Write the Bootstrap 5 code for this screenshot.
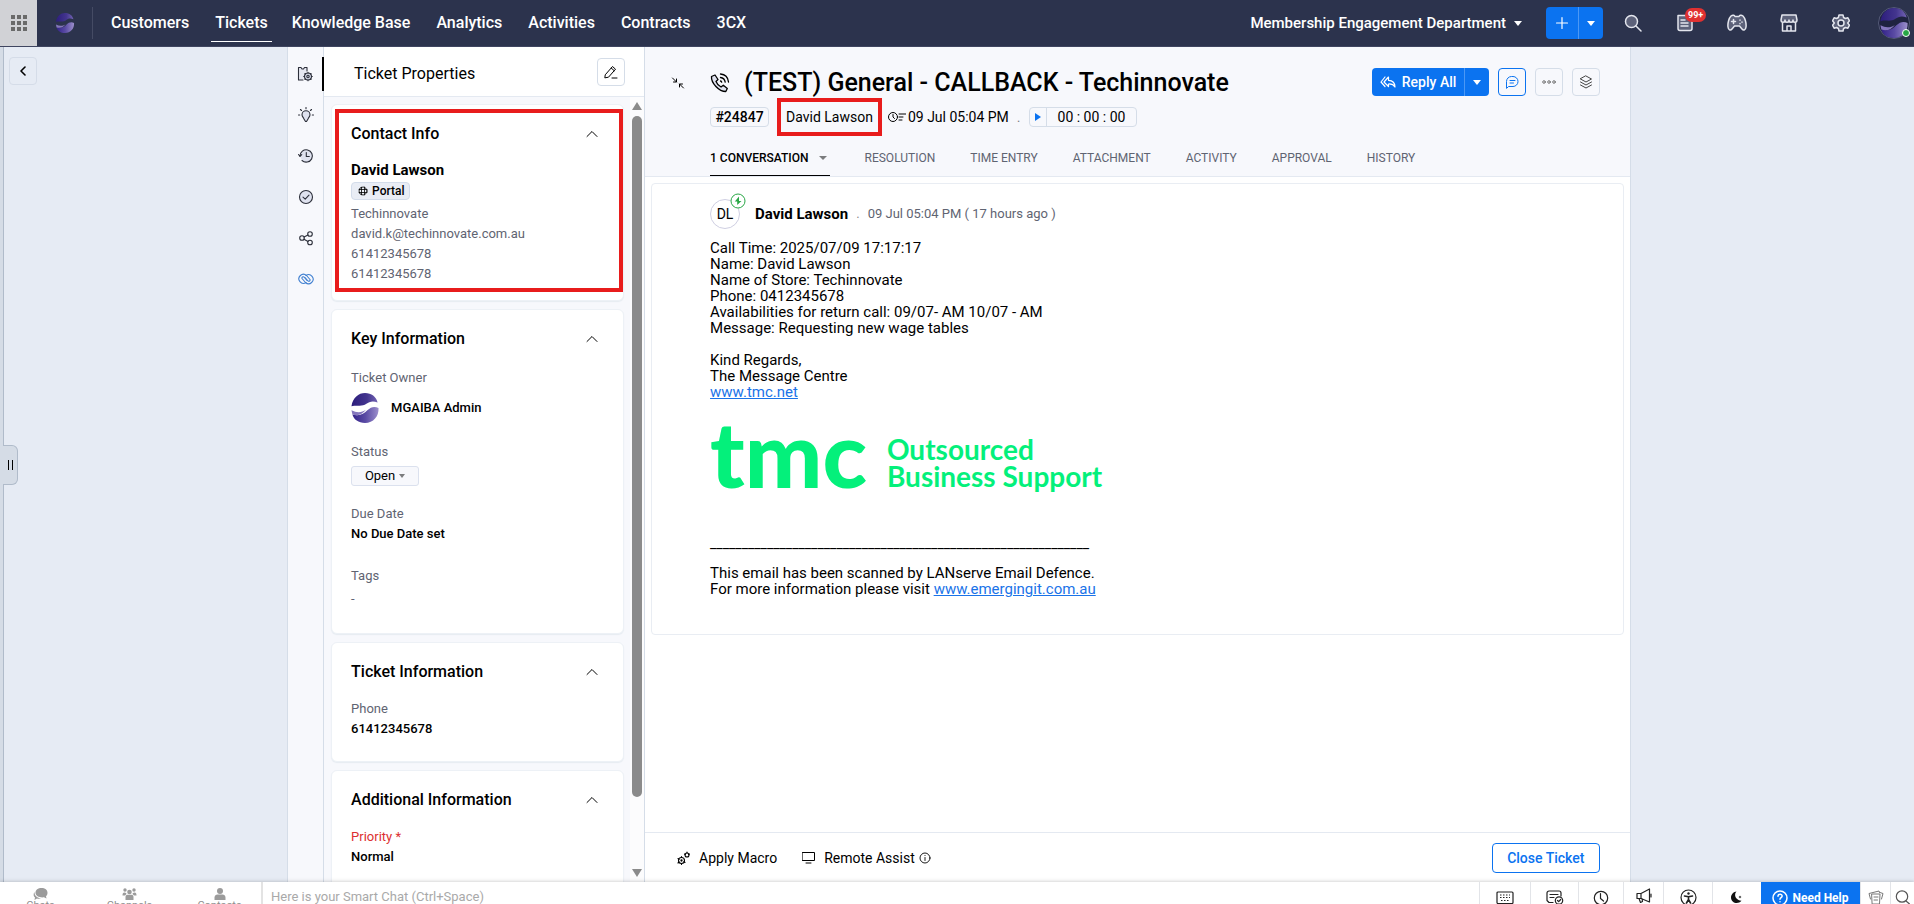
<!DOCTYPE html>
<html lang="en">
<head>
<meta charset="utf-8">
<meta name="viewport" content="width=device-width, initial-scale=1">
<title>#24847 General - CALLBACK</title>
<link rel="stylesheet" href="https://cdn.jsdelivr.net/npm/bootstrap@5.3.0/dist/css/bootstrap.min.css">
<style>
:root{--ink:#000;--soft:#5f6472;--line:#d5dde8;--pale:#f7f8fc;--blue:#0b73f0;--back:#e6ebf4;--red:#e81c1c}
body{font-family:Roboto,"Liberation Sans",sans-serif;font-size:13px;line-height:20px;color:var(--ink);background:var(--back)}
svg{display:block;flex:none}
.ico{fill:none;stroke:currentColor;stroke-width:1.2;stroke-linecap:round;stroke-linejoin:round}
button{color:inherit}
.plain{background:none;border:0;padding:0;white-space:nowrap}
/* top bar */
.topbar{height:47px;background:#2c334d;border-bottom:1px solid #3f4560;color:#fff;flex:none}
.apps{width:37px;background:#d1d2d6;color:#6a6a6a}
.brand-cell{width:56px;height:32px;border-right:1px solid #454b64}
.topbar .nav{margin-left:18px}
.topbar .nav-link{color:#fff;font-size:16px;font-weight:500;padding:0;line-height:38px;margin-right:26px;height:38px;border-bottom:1px solid transparent}
.topbar .nav-link.active{border-color:#fff;margin-left:-4px;margin-right:20px;padding:0 4px}
.dept{font-size:15px;font-weight:500}
.caret{width:0;height:0;border:4px solid transparent;border-top:5px solid currentColor;border-bottom:0}
.addgrp,.replygrp{background:var(--blue);color:#fff;border-radius:4px;overflow:hidden}
.addgrp{height:32px}
.addgrp .side,.replygrp .side{border-left:1px solid #4b98f5}
.topico{width:52px;height:46px;color:#e4e6ee}
.topico .ico{stroke-width:1.5}
.count{position:absolute;top:8px;left:26px;background:#e03131;color:#fff;border-radius:7px;font-size:9px;line-height:14px;padding:0 3px;font-weight:700}
.online{position:absolute;right:0;bottom:2px;width:8px;height:8px;border-radius:50%;background:#28a745;border:1px solid #fff}
/* side areas */
.leftside{width:15.05%;border-right:1px solid var(--line)}
.edge{width:4px;background:#d5dce6;border-right:1px solid #b0bbca}
.backbtn{width:28px;height:28px;margin:10px 0 0 5px;border:1px solid #d5dce8;border-radius:4px}
.grip{position:absolute;left:3px;top:398px;width:15px;height:40px;background:#d5dce6;border:1px solid #b0bbca;border-left:0;border-radius:0 6px 6px 0;gap:3px}
.grip i{width:1px;height:10px;background:#000}
.rightside{width:14.85%;border-left:1px solid var(--line)}
.rail{width:36px;background:var(--pale);border-right:1px solid var(--line);padding-top:10px}
.rail button{height:34px;margin-bottom:7px;width:36px;color:#2c2f3a}
.rail button.on{border-right:2px solid #000}
.rail .ico{stroke-width:1.1}
/* properties */
.props{width:321px;border-right:1px solid var(--line);background:var(--pale)}
.props-head{height:50px;background:#fff;border-bottom:1px solid #e4e9f1;padding:0 19px 0 30px;font-size:16px}
.square{width:28px;height:28px;border:1px solid var(--line);border-radius:4px;background:transparent}
.cards{padding:7px 0 0 7px;width:300px;gap:8px}
.panel{background:#fff;border:1px solid #edf1f6;border-radius:6px;box-shadow:0 1px 1px #e6ebf1;padding:19px 25px 0 19px;position:relative}
.panel h2{font-size:16px;font-weight:500;line-height:20px;margin:0}
.panel .lab{color:var(--soft)}
.panel .val{font-weight:500}
.marked{position:absolute;border:4px solid var(--red);pointer-events:none}
.portal{width:59px;height:18px;line-height:16px;border:1px solid #d3dcea;background:#e9edf5;border-radius:4px;font-size:12px;font-weight:500;padding:0 6px}
.openbtn{height:20px;width:68px;background:var(--pale);border:1px solid #dbe1ee;border-radius:3px;line-height:18px}
.bar{width:14px;padding:5px 2px;background:#fcfcfd}
.thumb{height:681px;margin:6px 0 auto;background:#8b8b8b;border-radius:5px}
.up,.down{width:0;height:0;border:5px solid transparent}
.up{border-bottom:8px solid #8b8b8b;border-top:0}
.down{border-top:8px solid #8b8b8b;border-bottom:0}
/* ticket */
.ticket{background:#fff}
.thead{background:var(--pale);border-bottom:1px solid #e4e9f1;height:130px}
.thead h1{font-size:25px;font-weight:500;line-height:32px;margin:0;white-space:nowrap}
.chip{height:20px;line-height:18px;border:1px solid var(--line);border-radius:4px;font-size:14px}
.row2{font-size:14px;white-space:nowrap}
.tabs{padding-left:65px}
.tabs .nav-link{color:var(--soft);padding:6px 0 7px;font-size:12px;line-height:20px;border-bottom:1px solid transparent;margin-right:35px;white-space:nowrap}
.tabs .nav-link.active{color:#000;border-color:#000;font-weight:500}
.reply{font-weight:500;font-size:14px}
.thread{margin:6px 6px 0;border:1px solid #e9edf3;border-radius:4px;padding:15px 58px 30px;min-height:452px}
.initials{width:30px;height:30px;border:1px solid #cfcfe2;border-radius:50%;position:relative;font-size:14px}
.initials svg{position:absolute;left:19px;top:-7px}
.mail{font-size:15px;line-height:16px;padding-top:11px}
.mail p{margin:0 0 16px}
.mail a{color:#1a73e8}
.tmc{font-family:Lato,sans-serif;color:#04f07b;height:58px;margin:24px 0 53px;gap:20px}
.tmc b{font-size:92px;font-weight:900;line-height:58px}
.tmc span{font-size:28px;font-weight:700;line-height:27px;padding-top:20px}
.mail .rule-line{font-size:14px;margin-bottom:14px}
.tfoot-bar{height:50px;border-top:1px solid #e4e9f1;padding:0 30px 0 32px;font-size:14px;font-weight:500;margin-top:auto}
.closebtn{height:30px;width:108px;border:1px solid var(--blue);border-radius:4px;color:var(--blue);font-weight:500;background:#fff}
/* chat strip */
.strip{height:22px;background:#fff;box-shadow:0 0 4px rgba(0,0,0,.25);position:relative;flex:none;overflow:visible;clip-path:inset(-6px 0 0 0)}
.strip-in{height:22px;overflow:hidden}
.tab3{width:89px;font-size:11px;line-height:12px;color:#8e8e8e;padding:6px 8px 0 0}
.tab3:nth-child(3){width:83px;padding-right:0}
.smart{border:0;border-left:2px solid #e3e3e3;padding:0 8px;height:28px;font-size:13px;outline:0;color:#333}
.smart::placeholder{color:#a9a9a9}
.cell{height:31px;border-left:1px solid #e2e4e8;color:#222}
.help{background:var(--blue);color:#fff;font-size:12px;font-weight:700;width:99px;height:31px}
</style>
</head>
<body class="vh-100 d-flex flex-column overflow-hidden">
<svg width="0" height="0" class="position-absolute" aria-hidden="true">
  <defs>
    <linearGradient id="ga"><stop offset="0" stop-color="#2c1d7c"/><stop offset=".6" stop-color="#43358e"/><stop offset="1" stop-color="#7263b3"/></linearGradient>
    <linearGradient id="gb"><stop offset="0" stop-color="#33228a"/><stop offset=".5" stop-color="#5a4ba4"/><stop offset="1" stop-color="#9c8fcc"/></linearGradient>
    <symbol id="swirl" viewBox="0 0 30 32">
      <path fill="url(#ga)" d="M.5 14C2 5 8 0 15 0c7 0 12 4 13.500 10-5-2-9-1-12 1.500C12 15 7 12.500.5 14z"/>
      <path fill="url(#gb)" d="M1.500 23c7 2 12 0 16-4.500 4-4 8-4.500 12-2.500C30 25 24 32 15 32 8 32 3 28.500 1.500 23z"/>
      <path fill="#8577bd" d="M.5 18.500c6 3 11 2.500 15.500-.5-4 5-8.500 7-14.500 5z"/>
    </symbol>
  </defs>
</svg>

<nav class="topbar d-flex align-items-center">
  <button class="plain apps h-100 d-flex align-items-center justify-content-center" aria-label="Apps">
    <svg width="16" height="16" fill="currentColor"><path d="M0 0h4v4H0zM6 0h4v4H6zM12 0h4v4h-4zM0 6h4v4H0zM6 6h4v4H6zM12 6h4v4h-4zM0 12h4v4H0zM6 12h4v4H6zM12 12h4v4h-4z"/></svg>
  </button>
  <a href="#" class="brand-cell d-flex align-items-center justify-content-center" aria-label="Home"><svg width="20" height="20"><use href="#swirl"/></svg></a>
  <div class="nav flex-nowrap">
    <a class="nav-link" href="#">Customers</a><a class="nav-link active" href="#">Tickets</a><a class="nav-link" href="#">Knowledge Base</a><a class="nav-link" href="#">Analytics</a><a class="nav-link" href="#">Activities</a><a class="nav-link" href="#">Contracts</a><a class="nav-link" href="#">3CX</a>
  </div>
  <div class="d-flex align-items-center ms-auto">
    <button class="plain dept d-flex align-items-center gap-2 me-4">Membership Engagement Department <span class="caret"></span></button>
    <div class="addgrp d-flex">
      <button class="plain px-2" aria-label="Add"><svg class="ico" width="16" height="16"><path d="M8 2.500v11M2.500 8h11"/></svg></button>
      <button class="plain side px-2" aria-label="More"><span class="caret d-block"></span></button>
    </div>
    <button class="plain topico d-flex align-items-center justify-content-center ms-1" aria-label="Search"><svg class="ico" width="18" height="18"><circle cx="7.500" cy="7.500" r="6" fill="#5d627a"/><path d="M12 12l5 5"/></svg></button>
    <button class="plain topico d-flex align-items-center justify-content-center position-relative" aria-label="Notifications"><svg class="ico" width="18" height="18"><path fill="#5d627a" d="M2 1.500h8l6 5v8a2 2 0 0 1-2 2H4a2 2 0 0 1-2-2z"/><path d="M5 6h4M5 9h7M5 12h7"/></svg><span class="count">99+</span></button>
    <button class="plain topico d-flex align-items-center justify-content-center" aria-label="Games"><svg class="ico" width="20" height="18"><path fill="#5d627a" d="M4 2c2-1.500 3.500-.5 4 .5h4c.5-1 2-2 4-.5 2 2 3.500 7 3 11-.3 3-2.500 4-4 2l-2.500-3h-5L5 15c-1.500 2-3.700 1-4-2C.5 9 2 4 4 2z"/><path d="M6.500 5.500v4M4.500 7.500h4M13 6v.2M15 8v.2M13 9.500v.2"/></svg></button>
    <button class="plain topico d-flex align-items-center justify-content-center" aria-label="Marketplace"><svg class="ico" width="18" height="18"><path fill="#5d627a" d="M2 1h14l1 5c0 3-4 3-4 0 0 3-4 3-4 0 0 3-4 3-4 0 0 3-4 3-4 0z"/><path d="M2.500 9v8h13V9M7 17v-5h4v5"/></svg></button>
    <button class="plain topico d-flex align-items-center justify-content-center" aria-label="Settings"><svg class="ico" width="18" height="18"><path fill="#5d627a" d="M7 1h4l.6 2.500 1.800 1 2.500-.7 1.600 3L15.700 9l1.800 2.200-1.600 3-2.500-.7-1.800 1L11 17H7l-.6-2.500-1.800-1-2.500.7-1.600-3L2.300 9 .5 6.800l1.600-3 2.500.7 1.800-1z"/><circle cx="9" cy="9" r="3" fill="#2c334d"/></svg></button>
    <button class="plain position-relative me-1" style="margin-left:11px" aria-label="Profile"><svg width="32" height="32"><circle cx="16" cy="16" r="15.500" fill="#1f2340" stroke="#555b78"/><use href="#swirl" x="1" y="1" width="30" height="30"/></svg><span class="online"></span></button>
  </div>
</nav>

<main class="d-flex flex-grow-1 overflow-hidden" style="min-height:0">
  <aside class="leftside d-flex align-items-stretch position-relative flex-shrink-0">
    <div class="edge"></div>
    <button class="plain backbtn d-flex align-items-center justify-content-center" aria-label="Back"><svg class="ico" width="8" height="10" style="stroke-width:1.6"><path d="M6 1L2 5l4 4"/></svg></button>
    <button class="grip p-0 d-flex align-items-center justify-content-center" aria-label="Expand"><i></i><i></i></button>
  </aside>

  <div class="rail flex-shrink-0">
    <button class="plain on d-flex align-items-center justify-content-center" aria-label="Properties"><svg class="ico" width="16" height="16"><path fill="#e6e8f2" d="M6 14H1.500V1.500H4l1 1.500 1.500 0L7.500 1.500H10V5"/><circle cx="11" cy="10.500" r="3.500" fill="#cfd3e2"/><circle cx="11" cy="10.500" r="1.200"/><path d="M11 6.200v.8M11 14v.8M6.700 10.500h.8M14.500 10.500h.8M8 7.500l.5.5M13.500 13l.5.500M14 7.500l-.5.5M8.500 13l-.5.500"/></svg></button>
    <button class="plain d-flex align-items-center justify-content-center" aria-label="Insights"><svg class="ico" width="16" height="16"><path fill="#dfe2ef" d="M6 12C5.500 10.500 4 9.700 4 7.800a4 4 0 0 1 8 0c0 1.900-1.500 2.700-2 4.200L8.500 14.500h-1z"/><path d="M8 .5v1.200M2.500 2.500l1 1M13.500 2.500l-1 1M.5 8h1.200M14.300 8h1.200"/></svg></button>
    <button class="plain d-flex align-items-center justify-content-center" aria-label="Recent"><svg class="ico" width="16" height="16"><path fill="#dfe2ef" d="M2 8a6.200 6.200 0 1 1 2 4.500"/><path d="M.5 6.500L2 8.300l1.700-1.600M8.300 4.500V8.500h3"/></svg></button>
    <button class="plain d-flex align-items-center justify-content-center" aria-label="Approvals"><svg class="ico" width="16" height="16"><circle cx="8" cy="8" r="6.500" fill="#dfe2ef"/><path d="M5 8.200l2.200 2L11 6.200"/></svg></button>
    <button class="plain d-flex align-items-center justify-content-center" aria-label="Share"><svg class="ico" width="16" height="16"><circle cx="4" cy="8" r="2.300"/><circle cx="12" cy="4" r="2.300"/><circle cx="12" cy="12.500" r="2.300"/><path d="M6 7l4-2M6 9.200l4 2.200"/></svg></button>
    <button class="plain d-flex align-items-center justify-content-center" style="color:#3f7fd0" aria-label="Linked"><svg class="ico" width="16" height="12"><path d="M8 9.500a4.500 4.500 0 1 1 .5-7L12 6.500a1.300 1.300 0 0 1-2 1.500L7 4.500"/><path d="M8 2.500a4.500 4.500 0 1 1-.5 7L4 5.500A1.300 1.300 0 0 1 6 4l3 3.500"/></svg></button>
  </div>

  <section class="props d-flex flex-column flex-shrink-0">
    <div class="props-head d-flex align-items-center justify-content-between flex-shrink-0"><span class="pt-1">Ticket Properties</span>
      <button class="square p-0 d-flex align-items-center justify-content-center" aria-label="Edit"><svg class="ico" width="14" height="14" style="stroke-width:1"><path d="M1.500 9.500l7-8 3 2.700-7 8-3.300.6zM7.200 3l3 2.700M8 13h5"/></svg></button>
    </div>
    <div class="d-flex flex-grow-1 overflow-hidden">
      <div class="cards d-flex flex-column">
        <article class="panel pb-3">
          <div class="d-flex justify-content-between align-items-center"><h2>Contact Info</h2><svg class="ico" width="12" height="8" style="stroke-width:1"><path d="M1 6.500l5-5 5 5"/></svg></div>
          <div class="fw-bold" style="font-size:15px;line-height:24px;margin-top:14px">David Lawson</div>
          <div class="portal d-flex align-items-center gap-1"><svg class="ico" width="10" height="10" style="stroke-width:.8"><circle cx="5" cy="5" r="4"/><path d="M1 3.500h8M1 6.500h8M3.500 1.200v7.600M6.500 1.200v7.600"/></svg>Portal</div>
          <div class="lab pt-1">Techinnovate<br>david.k@techinnovate.com.au<br>61412345678<br>61412345678</div>
          <div class="marked" style="inset:4px 0 8px 3px"></div>
        </article>
        <article class="panel pb-4">
          <div class="d-flex justify-content-between align-items-center"><h2>Key Information</h2><svg class="ico" width="12" height="8" style="stroke-width:1"><path d="M1 6.500l5-5 5 5"/></svg></div>
          <div class="lab" style="margin-top:19px">Ticket Owner</div>
          <div class="val d-flex align-items-center" style="margin-top:5px;gap:12px"><svg width="28" height="30"><use href="#swirl"/></svg>MGAIBA Admin</div>
          <div class="lab" style="margin-top:19px">Status</div>
          <button class="openbtn d-flex align-items-center justify-content-center gap-1 mt-1 p-0">Open <span class="caret text-black-50" style="border-width:4px 3px 0"></span></button>
          <div class="lab" style="margin-top:18px">Due Date</div>
          <div class="val">No Due Date set</div>
          <div class="lab" style="margin-top:22px">Tags</div>
          <div class="lab" style="margin-top:3px">-</div>
        </article>
        <article class="panel" style="padding-bottom:22px">
          <div class="d-flex justify-content-between align-items-center"><h2>Ticket Information</h2><svg class="ico" width="12" height="8" style="stroke-width:1"><path d="M1 6.500l5-5 5 5"/></svg></div>
          <div class="lab" style="margin-top:17px">Phone</div>
          <div class="val">61412345678</div>
        </article>
        <article class="panel pb-5">
          <div class="d-flex justify-content-between align-items-center"><h2>Additional Information</h2><svg class="ico" width="12" height="8" style="stroke-width:1"><path d="M1 6.500l5-5 5 5"/></svg></div>
          <div style="margin-top:17px;color:#dc3030">Priority *</div>
          <div class="val">Normal</div>
        </article>
      </div>
      <div class="bar ms-auto d-flex flex-column"><div class="up"></div><div class="thumb w-100"></div><div class="down"></div></div>
    </div>
  </section>

  <section class="ticket d-flex flex-column flex-grow-1" style="min-width:0">
    <header class="thead d-flex flex-column flex-shrink-0">
      <div class="d-flex">
        <button class="plain align-self-start flex-shrink-0" style="width:65px;padding:29px 0 0 26px" aria-label="Collapse"><svg class="ico" width="14" height="14" style="stroke-width:1"><path d="M1.500 2l4 4M5.500 3v3h-3M12.500 12l-4-4M8.500 11V8h3"/></svg></button>
        <div class="flex-grow-1" style="padding-top:20px">
          <div class="d-flex align-items-center" style="gap:14px">
            <svg class="ico" width="20" height="20" style="stroke-width:1.300"><path fill="#dfe2ef" d="M1.500 3.500L5 2l3 4.500-2 2c1 2.500 3 4.500 5 5.500l2.300-1.800 4 3.300-1.500 3C9 18.500 1 10 1.500 3.500z"/><path d="M10.500 4.500c2.500.3 4.300 2 4.700 4.700M10.500 1c4.500.3 7.500 3.500 8 8M10.500 8c.6.100 1 .5 1.200 1.200"/></svg>
            <h1>(TEST) General - CALLBACK - Techinnovate</h1>
          </div>
          <div class="row2 d-flex align-items-center mt-2">
            <span class="chip text-center" style="width:59px;font-weight:500">#24847</span>
            <span class="position-relative" style="margin:0 15px 0 17px"><a href="#" class="text-black text-decoration-none">David Lawson</a><span class="marked" style="inset:-9px"></span></span>
            <svg class="ico" width="18" height="12" style="stroke-width:1;margin-right:2px"><circle cx="5" cy="6" r="4.500"/><path d="M5 3.500V6l1.500 1.500M11 3h7M11 6h4M11 9h3"/></svg>
            <span>09 Jul 05:04 PM</span>
            <span class="mx-2 text-black-50">.</span>
            <span class="chip d-flex"><button class="plain d-flex align-items-center justify-content-center" style="width:17px;border-right:1px solid #d5dde8" aria-label="Start timer"><svg width="6" height="8"><path fill="#0b73f0" d="M0 0l6 4-6 4z"/></svg></button><span style="padding:0 11px">00 : 00 : 00</span></span>
          </div>
        </div>
        <div class="d-flex align-self-start" style="gap:9px;padding:21px 30px 0 0">
          <div class="replygrp d-flex" style="height:28px">
            <button class="plain reply d-flex align-items-center ps-2 pe-1" style="gap:6px"><svg class="ico" width="16" height="12"><path d="M5 1L1 6l4 4.500M8.500 1L4 6l4.500 4.500V8c3-.2 5 .5 6.500 3 0-4-2.500-6.500-6.500-6.700z"/></svg>Reply All&nbsp;</button>
            <button class="plain side px-2" aria-label="Reply options"><span class="caret d-block" style="border-width:5px 4px 0"></span></button>
          </div>
          <button class="square p-0 d-flex align-items-center justify-content-center" style="border-color:#0b73f0;color:#0b73f0" aria-label="Comment"><svg class="ico" width="14" height="14" style="stroke-width:1"><path d="M1.500 13V6.500A5 5 0 0 1 6.500 1.500h1.500a5 5 0 0 1 0 10H4zM5 5.500h5M5 8h3.500"/></svg></button>
          <button class="square p-0 d-flex align-items-center justify-content-center" style="color:#666" aria-label="More actions"><svg class="ico" width="14" height="6" style="stroke-width:.9"><circle cx="2" cy="3" r="1.300"/><circle cx="7" cy="3" r="1.300"/><circle cx="12" cy="3" r="1.300"/></svg></button>
          <button class="square p-0 d-flex align-items-center justify-content-center" style="color:#444" aria-label="Layers"><svg class="ico" width="14" height="14" style="stroke-width:1"><path d="M7 1l5.500 3L7 7 1.500 4zM1.500 7L7 10l5.500-3M1.500 10L7 13l5.500-3"/></svg></button>
        </div>
      </div>
      <div class="tabs nav flex-nowrap mt-auto">
        <a class="nav-link active d-flex align-items-center" href="#">1 CONVERSATION <span class="caret text-black-50" style="border-width:4px 4px 0;margin:0 3px 0 10px"></span></a><a class="nav-link" href="#">RESOLUTION</a><a class="nav-link" href="#">TIME ENTRY</a><a class="nav-link" href="#">ATTACHMENT</a><a class="nav-link" href="#">ACTIVITY</a><a class="nav-link" href="#">APPROVAL</a><a class="nav-link" href="#">HISTORY</a>
      </div>
    </header>

    <article class="thread">
      <div class="d-flex align-items-center">
        <div class="initials d-flex align-items-center justify-content-center">DL<svg width="16" height="16"><circle cx="8" cy="8" r="7" fill="#fff" stroke="#28a745"/><path fill="#28a745" d="M9 3.500L4.800 8.500h2.400v3.500L11.500 8H9z"/></svg></div>
        <strong style="font-size:15px;margin-left:15px">David Lawson</strong>
        <span class="mx-2 text-black-50">.</span>
        <span style="color:var(--soft)">09 Jul 05:04 PM ( 17 hours ago )</span>
      </div>
      <div class="mail">
        <p>Call Time: 2025/07/09 17:17:17<br>Name: David Lawson<br>Name of Store: Techinnovate<br>Phone: 0412345678<br>Availabilities for return call: 09/07- AM 10/07 - AM<br>Message: Requesting new wage tables</p>
        <p>Kind Regards,<br>The Message Centre<br><a href="#">www.tmc.net</a></p>
        <div class="tmc d-flex align-items-center"><b>tmc</b><span>Outsourced<br>Business Support</span></div>
        <p class="rule-line">____________________________________________________________</p>
        <p class="mb-0">This email has been scanned by LANserve Email Defence.<br>For more information please visit <a href="#">www.emergingit.com.au</a></p>
      </div>
    </article>

    <footer class="tfoot-bar d-flex align-items-center flex-shrink-0">
      <button class="plain d-flex align-items-center"><svg class="ico" width="13" height="14" style="stroke-width:1.100;margin-right:9px"><circle cx="4.500" cy="9.500" r="3"/><circle cx="4.500" cy="9.500" r=".6"/><circle cx="10" cy="4" r="2"/><path d="M4.500 5.500v1M1 7.500l1 .8M1 12l1-1M4.500 12.500v1M8 11.500l-1-.8M10 1v1M12.500 3l-1 .5M7.500 3l.8.500"/></svg>Apply Macro</button>
      <button class="plain d-flex align-items-center" style="margin-left:25px"><svg class="ico" width="13" height="13" style="stroke-width:1;margin-right:9px"><path d="M.5 1.500h12v8H.5zM4 12h5"/></svg>Remote Assist<svg class="ico ms-1" width="12" height="12" style="stroke-width:.9"><circle cx="6" cy="6" r="5"/><path d="M6 5.500v3M6 3.500v.1"/></svg></button>
      <button class="closebtn ms-auto p-0">Close Ticket</button>
    </footer>
  </section>
  <div class="rightside flex-shrink-0"></div>
</main>

<div class="strip">
  <div class="strip-in d-flex align-items-start">
    <button class="plain tab3 d-flex flex-column align-items-center"><svg width="15" height="12" fill="#9b9b9b"><path d="M8.500 0c3.600 0 6 2 6 4.800 0 1.500-.5 2.700-1.500 3.500l.5 2.200-2.500-1.200c-4 .6-8.500-1-8.500-4.500C2.500 2 5 0 8.500 0z"/><path d="M1.500 4C0 6 .5 8.500 2 9.500L1.500 12l2.500-1.500c1 .4 2.500.5 4 0C4.500 10 1.500 8 1.500 4z"/></svg>Chats</button>
    <button class="plain tab3 d-flex flex-column align-items-center"><svg width="15" height="12" fill="#9b9b9b"><circle cx="7.500" cy="4" r="2.300"/><circle cx="3" cy="2" r="1.700"/><circle cx="12" cy="2" r="1.700"/><path d="M3.500 12V9c0-1.500 1-2.200 2-2.200h4c1 0 2 .7 2 2.200v3zM.5 7.500c0-2 .5-3 2-3 1.200 0 2 .8 2 1.500L3 7.500zM14.500 7.500c0-2-.5-3-2-3-1.200 0-2 .8-2 1.500L12 7.500z"/></svg>Channels</button>
    <button class="plain tab3 d-flex flex-column align-items-center"><svg width="12" height="12" fill="#9b9b9b"><circle cx="6" cy="3" r="3"/><path d="M.5 12V9.500c0-2 1.500-3 3-3h5c1.500 0 3 1 3 3V12z"/></svg>Contacts</button>
    <input class="smart flex-grow-1" aria-label="Smart Chat" placeholder="Here is your Smart Chat (Ctrl+Space)">
    <button class="plain cell d-flex align-items-center justify-content-center" style="width:51px" aria-label="Keyboard"><svg class="ico" width="18" height="14"><rect x="1" y="1" width="16" height="11.500" rx="1"/><path d="M4 4h10M4 6.500h10M5 9.500h8" stroke-dasharray="1.500 1.500" stroke-linecap="butt"/></svg></button>
    <button class="plain cell d-flex align-items-center justify-content-center" style="width:48px" aria-label="Tasks"><svg class="ico" width="18" height="15"><path d="M7 12.500H3L1 10.500V3a2 2 0 0 1 2-2h10a2 2 0 0 1 2 2v3M4 4.500h8M4 7.500h4"/><circle cx="13" cy="10.500" r="3.700"/><path d="M11.500 10.500l1.200 1.200 2-2.200"/></svg></button>
    <button class="plain cell d-flex align-items-center justify-content-center" style="width:45px" aria-label="Reminders"><svg class="ico" width="16" height="16"><circle cx="8" cy="8" r="6.700"/><path d="M7.500 3.500v5l3 2.500"/></svg></button>
    <button class="plain cell d-flex align-items-center justify-content-center" style="width:40px" aria-label="Announcements"><svg class="ico mb-1" width="16" height="15"><path d="M1 5.500h4v5H1zM5 5.500L13.500 1v13L5 10.500M3 10.500l1.500 4 2-1-.5-3M15 6v3"/></svg></button>
    <button class="plain cell d-flex align-items-center justify-content-center" style="width:49px" aria-label="Accessibility"><svg class="ico" width="17" height="17"><circle cx="8.500" cy="8.500" r="7.500"/><circle cx="8.500" cy="4.500" r="1.200" fill="#222" stroke="none"/><path d="M4.500 7l4 .8 4-.8M8.500 8v2.500L6.500 14M8.500 10.500l2 3.500" stroke-width="1.600"/></svg></button>
    <button class="plain cell d-flex align-items-center justify-content-center" style="width:49px" aria-label="Night mode"><svg width="12" height="13" fill="#111"><path d="M5.500.5C3 3 3.500 8.500 10.500 9.800 7 14 0 12 0 6.500 0 3 3 .8 5.500.5zM9 4.500l.5 1 1 .500-1 .500-.5 1-.5-1-1-.500 1-.500z"/></svg></button>
    <button class="plain help d-flex align-items-center justify-content-center gap-1"><svg class="ico" width="16" height="16" style="stroke-width:1.500"><circle cx="8" cy="8" r="7"/><path d="M6 6.300c0-3 4.300-2.600 4.100-.2C10 7.600 8 7.600 8 9.300M8 11.700v.1"/></svg>Need Help</button>
    <button class="plain cell d-flex align-items-center justify-content-center" style="width:30px;color:#777" aria-label="Notes"><svg class="ico" width="16" height="15" style="stroke-width:1"><path d="M4 4h8l-.5 10h-7zM2.500 9L1 3.500 11 1l.5 1.500M13.500 9L15 3.500l-3-1M6 7h4M6 10h3.500"/></svg></button>
    <button class="plain cell d-flex align-items-center justify-content-center" style="width:24px;color:#555" aria-label="Find"><svg class="ico" width="15" height="15"><circle cx="7" cy="6.500" r="5.700"/><path d="M11 11l3.500 3"/></svg></button>
  </div>
</div>
<script src="https://cdn.jsdelivr.net/npm/bootstrap@5.3.0/dist/js/bootstrap.bundle.min.js"></script>
</body>
</html>
